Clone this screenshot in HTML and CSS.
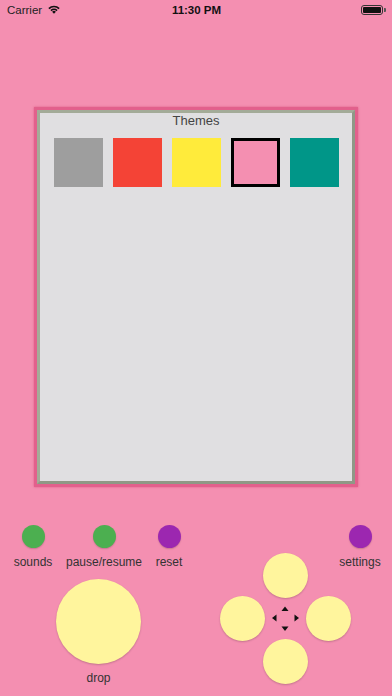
FILE: index.html
```html
<!DOCTYPE html>
<html>
<head>
<meta charset="utf-8">
<link rel="stylesheet" href="styles.css">
</head>
<body>
<div class="screen">
  <div class="statusbar">
    <div class="sb-left">
      <span class="carrier">Carrier</span>
      <svg class="wifi" width="12" height="9" viewBox="0 0 12 9">
        <path d="M6 8.8 L4.1 6.8 A2.7 2.7 0 0 1 7.9 6.8 Z" fill="#111"/>
        <path d="M2.4 5.1 A5.1 5.1 0 0 1 9.6 5.1 L8.5 6.2 A3.6 3.6 0 0 0 3.5 6.2 Z" fill="#111"/>
        <path d="M0.3 3 A8.1 8.1 0 0 1 11.7 3 L10.5 4.2 A6.4 6.4 0 0 0 1.5 4.2 Z" fill="#111"/>
      </svg>
    </div>
    <div class="time">11:30 PM</div>
    <div class="sb-right">
      <div class="battery"><div class="battery-fill"></div></div>
      <div class="battery-cap"></div>
    </div>
  </div>

  <div class="board">
    <div class="board-inner">
      <div class="themes-title">Themes</div>
      <div class="swatches">
        <div class="swatch gray"></div>
        <div class="swatch red"></div>
        <div class="swatch yellow"></div>
        <div class="swatch pink selected"></div>
        <div class="swatch teal"></div>
      </div>
    </div>
  </div>

  <div class="controls">
    <div class="left">
      <div class="btnrow">
        <div class="btn w-sounds"><div class="dot green"></div><div class="label">sounds</div></div>
        <div class="btn w-pause"><div class="dot green"></div><div class="label">pause/resume</div></div>
        <div class="btn w-reset"><div class="dot purple"></div><div class="label">reset</div></div>
      </div>
      <div class="drop-wrap">
        <div class="drop"></div>
        <div class="label">drop</div>
      </div>
    </div>
    <div class="right">
      <div class="btn w-settings"><div class="dot purple"></div><div class="label">settings</div></div>
      <div class="dpad">
        <div class="cell"></div>
        <div class="cell"><div class="pad"></div></div>
        <div class="cell"></div>
        <div class="cell"><div class="pad"></div></div>
        <div class="cell center">
          <svg width="43" height="43" viewBox="0 0 43 43">
            <polygon points="17.5,14 24.5,14 21,9.5" fill="#111"/>
            <polygon points="17.5,29.5 24.5,29.5 21,34" fill="#111"/>
            <polygon points="12.5,17.5 12.5,24.5 8,21" fill="#111"/>
            <polygon points="30.5,17.5 30.5,24.5 35,21" fill="#111"/>
          </svg>
        </div>
        <div class="cell"><div class="pad"></div></div>
        <div class="cell"></div>
        <div class="cell"><div class="pad"></div></div>
        <div class="cell"></div>
      </div>
    </div>
  </div>
</div>
</body>
</html>
```

FILE: styles.css
```css
* { box-sizing: border-box; }
html, body {
  margin: 0;
  padding: 0;
  background: #f48fb1;
  font-family: "Liberation Sans", Arial, sans-serif;
}
.screen {
  width: 392px;
  height: 696px;
  background: #f48fb1;
  overflow: hidden;
  display: flex;
  flex-direction: column;
}
.statusbar {
  height: 20px;
  display: flex;
  align-items: center;
  justify-content: space-between;
  padding: 0 6px 0 7px;
  color: #111;
  font-size: 11.5px;
}
.sb-left {
  width: 80px;
  display: flex;
  align-items: center;
  gap: 6px;
}
.carrier { color: #222; }
.wifi { margin-top: -1px; }
.time {
  font-weight: bold;
  font-size: 11.5px;
}
.sb-right {
  width: 80px;
  display: flex;
  justify-content: flex-end;
  align-items: center;
}
.battery {
  width: 22px;
  height: 10px;
  border: 1px solid #333;
  border-radius: 3px;
  padding: 1px;
}
.battery-fill {
  width: 100%;
  height: 100%;
  background: #111;
  border-radius: 1px;
}
.battery-cap {
  width: 1.5px;
  height: 4px;
  background: #555;
  border-radius: 0 1px 1px 0;
  margin-left: 1px;
}

.board {
  margin: 87px 0 0 34px;
  width: 324px;
  height: 380px;
  border: 3px solid #e2608c;
  box-shadow: 0 0 2px rgba(200, 40, 90, 0.5);
}
.board-inner {
  width: 100%;
  height: 100%;
  border: 3px solid #97a08d;
  border-color: #a3ab98 #8f9886 #8f9886 #a3ab98;
  background: #e0dfe1;
  display: flex;
  flex-direction: column;
  align-items: center;
}
.themes-title {
  font-size: 13px;
  line-height: 16px;
  color: #444;
  margin-top: 0;
}
.swatches {
  display: flex;
  gap: 10px;
  margin-top: 9px;
}
.swatch {
  width: 49px;
  height: 49px;
}
.gray { background: #9e9e9e; }
.red { background: #f44336; }
.yellow { background: #ffeb3b; }
.pink { background: #f48fb1; }
.teal { background: #009688; }
.selected { border: 3px solid #000; }

.controls {
  display: flex;
  margin-top: 38px;
}
.left {
  width: 200px;
  display: flex;
  flex-direction: column;
}
.btnrow {
  display: flex;
  padding-left: 8px;
}
.btn {
  display: flex;
  flex-direction: column;
  align-items: center;
}
.w-sounds { width: 50px; }
.w-pause { width: 80px; margin-left: 6px; }
.w-reset { width: 40px; margin-left: 5px; }
.w-settings { width: 50px; }
.dot {
  width: 23px;
  height: 23px;
  border-radius: 50%;
  box-shadow: 0 1px 1.5px rgba(0, 0, 0, 0.18);
}
.green { background: #4caf50; }
.purple { background: #9c27b0; }
.label {
  font-size: 12px;
  line-height: 14px;
  color: #333;
  margin-top: 6.5px;
  white-space: nowrap;
}
.drop-wrap {
  margin: 10.5px 0 0 56px;
  width: 85px;
  display: flex;
  flex-direction: column;
  align-items: center;
}
.drop {
  width: 85px;
  height: 85px;
  border-radius: 50%;
  background: #fff59d;
  box-shadow: 0 1px 2px rgba(0, 0, 0, 0.2);
}
.right {
  flex: 1;
  display: flex;
  flex-direction: column;
  align-items: flex-end;
  padding-right: 7px;
}
.dpad {
  align-self: flex-start;
  margin: -15px 0 0 21px;
  display: grid;
  grid-template-columns: repeat(3, 43px);
  grid-template-rows: repeat(3, 43px);
}
.cell {
  width: 43px;
  height: 43px;
  display: flex;
  align-items: center;
  justify-content: center;
}
.pad {
  flex: none;
  width: 45px;
  height: 45px;
  border-radius: 50%;
  background: #fff59d;
  box-shadow: 0 1px 2px rgba(0, 0, 0, 0.2);
}
.center svg { display: block; }
```
